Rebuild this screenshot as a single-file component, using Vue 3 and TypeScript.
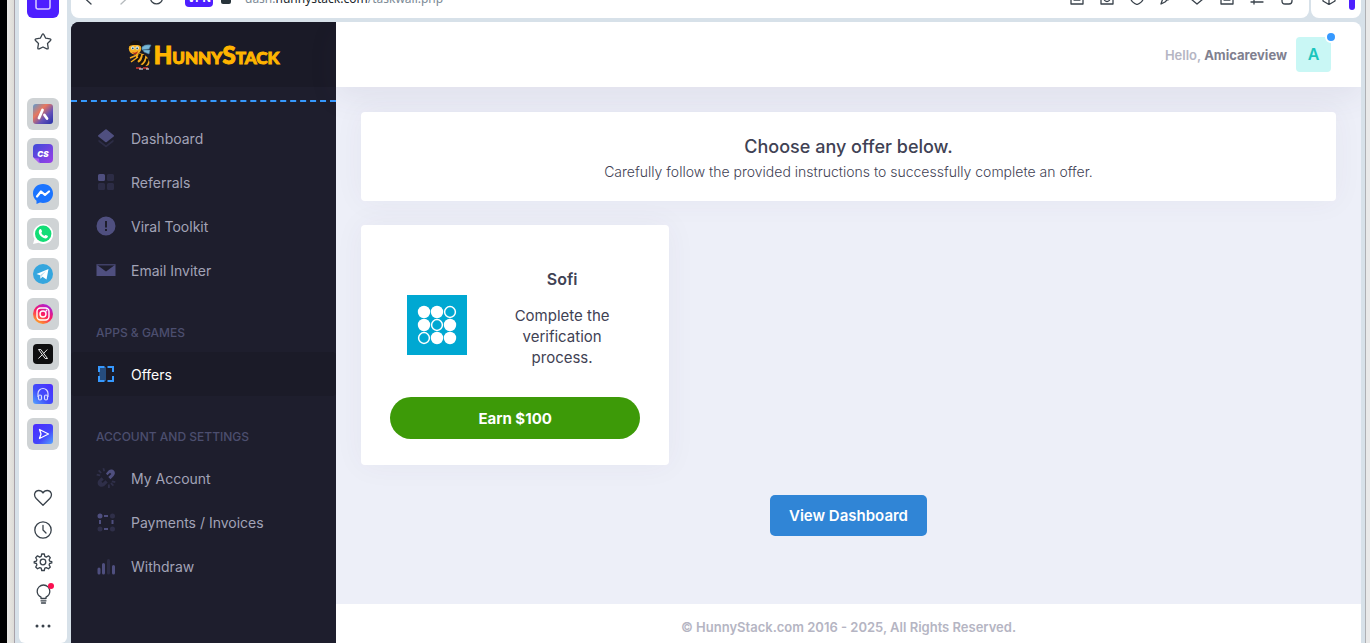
<script setup lang="ts">
interface Shape {
  d: string
  o?: number
}
interface MenuItem {
  label: string
  shapes: Shape[]
  active?: boolean
}
interface MenuGroup {
  title?: string
  items: MenuItem[]
}

const groups: MenuGroup[] = [
  {
    items: [
      {
        label: 'Dashboard',
        shapes: [
          { d: 'M11.3 3.6a1.2 1.2 0 0 1 1.4 0l7 5.6c.5.4.5 1 0 1.400l-7 5.500a1.200 1.200 0 0 1-1.400 0l-7-5.500a.9.9 0 0 1 0-1.400z' },
          { d: 'M4.500 13.500 12 19.300l7.500-5.800v2.200L12.700 21a1.200 1.200 0 0 1-1.400 0l-6.800-5.300z', o: 0.3 },
        ],
      },
      {
        label: 'Referrals',
        shapes: [
          { d: 'M5.500 4h4A1.500 1.500 0 0 1 11 5.500v4A1.500 1.500 0 0 1 9.500 11h-4A1.500 1.500 0 0 1 4 9.500v-4A1.500 1.500 0 0 1 5.500 4z' },
          {
            d: 'M14.500 4h4A1.500 1.500 0 0 1 20 5.500v4a1.500 1.500 0 0 1-1.500 1.500h-4A1.500 1.500 0 0 1 13 9.500v-4A1.500 1.500 0 0 1 14.500 4zM5.500 13h4a1.500 1.500 0 0 1 1.500 1.500v4A1.500 1.500 0 0 1 9.500 20h-4A1.500 1.500 0 0 1 4 18.500v-4A1.500 1.500 0 0 1 5.500 13zM14.500 13h4a1.500 1.500 0 0 1 1.500 1.500v4a1.500 1.500 0 0 1-1.500 1.500h-4a1.500 1.500 0 0 1-1.500-1.500v-4a1.500 1.500 0 0 1 1.500-1.500z',
            o: 0.3,
          },
        ],
      },
      {
        label: 'Viral Toolkit',
        shapes: [{ d: 'M12 2.500a9.500 9.500 0 1 1 0 19 9.500 9.500 0 0 1 0-19zM11 7v6.500h2V7zM11 15v2h2v-2z' }],
      },
      {
        label: 'Email Inviter',
        shapes: [
          { d: 'M2.500 6.500 12 13.500l9.500-7V18h-19z' },
          { d: 'M2.500 6h19v.7L20 7.500H4l-1.500-.8z', o: 0.7 },
        ],
      },
    ],
  },
  {
    title: 'APPS & GAMES',
    items: [
      {
        label: 'Offers',
        active: true,
        shapes: [
          { d: 'M4 4h6.500v2H6v4H4zM13.500 4H20v6h-2V6h-4.500zM4 14h2v4h4.500v2H4zM18 14h2v6h-6.500v-2H18z' },
          { d: 'M5 5h7v14H5z', o: 0.4 },
        ],
      },
    ],
  },
  {
    title: 'ACCOUNT AND SETTINGS',
    items: [
      {
        label: 'My Account',
        shapes: [
          { d: 'M12 7.500 14.600 4.600c2-1.800 4.800-1 5.800.7.900 1.600.5 3.300-.8 4.600L16.500 13.200l-2.200-2.200 3-3-1.300-1.300-2.600 2.600z' },
          {
            d: 'M7.500 11.200l2.200 2.200-2.300 2.300 1.300 1.300 2.800-2.800 2.200 2.200-3.200 3.300c-1.900 1.700-4.500 1.300-5.900-.3-1.400-1.500-1.300-3.900.2-5.400zM8.500 2.600l1.700-.5.900 3-1.700.5zM4 5l1.300-1.200 2.500 2.600L6.500 7.600zM2.500 9.400l.4-1.700 3.500.8-.4 1.700zM18 14.500l3.500.8-.4 1.700-3.500-.8zM16.300 17.800l1.300-1.200 2.400 2.400-1.200 1.300zM14 18.500h1.800V22H14z',
            o: 0.35,
          },
        ],
      },
      {
        label: 'Payments / Invoices',
        shapes: [
          { d: 'M6 3.500a2.500 2.500 0 1 1 0 5 2.500 2.500 0 0 1 0-5zM10 5h4v2h-4zM10 18h4v2h-4zM5 10h2v4H5zM17.500 10h2v4h-2z' },
          {
            d: 'M18.500 3.500a2.500 2.500 0 1 1 0 5 2.500 2.500 0 0 1 0-5zM6 16.500a2.500 2.500 0 1 1 0 5 2.500 2.500 0 0 1 0-5zM18.500 16.500a2.500 2.500 0 1 1 0 5 2.500 2.500 0 0 1 0-5z',
            o: 0.35,
          },
        ],
      },
      {
        label: 'Withdraw',
        shapes: [
          { d: 'M3.500 15a1.500 1.500 0 0 1 3 0v4a1.500 1.500 0 0 1-3 0zM8 10.500a1.500 1.500 0 0 1 3 0V19a1.500 1.500 0 0 1-3 0zM18 12.500a1.500 1.500 0 0 1 3 0V19a1.500 1.500 0 0 1-3 0z' },
          { d: 'M13 6.500a1.500 1.500 0 0 1 3 0V19a1.500 1.500 0 0 1-3 0z', o: 0.3 },
        ],
      },
    ],
  },
]

const toolIcons: string[] = [
  'M2 1h12v14H2zM5 11h6',
  'M2 3h12v12H2zM8 6.500a3 3 0 1 1 0 6 3 3 0 0 1 0-6z',
  'M2 5l6-4 6 4v5c0 2-3 4.500-6 5.500-3-1-6-3.500-6-5.500z',
  'M15 4 6 13l-4 2 2-6zM4 9l5 2',
  'M8 15 2 10c-2-4 3-9 6-4 3-5 8 0 6 4z',
  'M2 2h12v13H2zM8 5v6M5 11h6',
  'M2 8h12M2 13h12M5 11v4',
  'M3 6h10v6c0 2-1 3-3 3H6c-2 0-3-1-3-3z',
]

const dots = [0, 1, 2, 3, 4, 5, 6, 7, 8].map((i) => ({
  cx: 17 + (i % 3) * 13,
  cy: 17 + Math.floor(i / 3) * 13,
  hollow: i === 2 || i === 4 || i === 6,
}))
</script>

<template>
  <div class="desktop">
    <div class="edge-black"></div>
    <div class="edge-light"></div>
    <nav class="rail" aria-label="Browser sidebar">
      <div class="rail-top">
        <button class="workspace" aria-label="Workspace">
          <svg viewBox="0 0 16 16" width="16" height="16"><rect x="1" y="1" width="14" height="14" rx="2" fill="none" stroke="#d9cfff" stroke-width="1.500" /></svg>
        </button>
      </div>
      <button class="rail-btn star" aria-label="Bookmarks">
        <svg viewBox="0 0 20 20" width="20" height="20" class="line"><path d="M9.200 2.500q.8-1.200 1.600 0l1.900 3.700 4.300.7q1.500.4.500 1.600l-3 3 .7 4.400q0 1.500-1.400.9L10 15l-3.800 1.800q-1.400.6-1.400-.9l.7-4.400-3-3q-1-1.200.5-1.600l4.300-.7z" /></svg>
      </button>
      <div class="apps">
        <button class="tile" aria-label="Aria">
          <svg viewBox="0 0 20 20" width="20" height="20">
            <defs><linearGradient id="ga" x1="0" y1="0" x2="1" y2="1"><stop offset="0" stop-color="#5b9bd0" /><stop offset=".35" stop-color="#e8775d" /><stop offset=".65" stop-color="#6452b8" /><stop offset="1" stop-color="#2531a8" /></linearGradient></defs>
            <rect width="20" height="20" rx="3" fill="url(#ga)" />
            <path d="M9.500 6 6 14M11.500 11l2.500 3.500" stroke="#fff" stroke-width="2.800" stroke-linecap="round" />
          </svg>
        </button>
        <button class="tile" aria-label="CS">
          <svg viewBox="0 0 20 20" width="20" height="20">
            <defs><linearGradient id="gb" x1="0" y1="0" x2="1" y2="1"><stop offset="0" stop-color="#3d4bd8" /><stop offset="1" stop-color="#9a3fe8" /></linearGradient></defs>
            <path d="M4 0h12q4 0 4 4v11q0 4-4 4H7L0 13V4q0-4 4-4z" fill="url(#gb)" /><path d="M1 14l5 .500.500 5z" fill="#a95cf0" />
            <text x="10" y="13" text-anchor="middle" class="cs">CS</text>
          </svg>
        </button>
        <button class="tile" aria-label="Messenger">
          <svg viewBox="0 0 20 20" width="20" height="20"><path d="M10 0c6 0 10 4.200 10 9.500S16 19 10 19l-3-.400L3.500 20v-3.300C1.300 15 0 12.500 0 9.500 0 4.200 4 0 10 0z" fill="#1b74ff" /><path d="M4 12.500 8 7.500l4 3.300 4-3.300" fill="none" stroke="#fff" stroke-width="2.200" stroke-linejoin="round" stroke-linecap="round" /></svg>
        </button>
        <button class="tile" aria-label="WhatsApp">
          <svg viewBox="0 0 20 20" width="20" height="20"><path d="M10 0a10 10 0 1 1-4.500 18.800L0 20l1.500-5A10 10 0 0 1 10 0z" fill="#fff" /><circle cx="10.200" cy="9.800" r="8.200" fill="#12dd76" /><path d="M6.500 5.500c1-1 1.600-.500 2 .500l.5 1.300c.2.700-.8 1.200-.6 1.700.6 1.300 1.600 2.200 2.800 2.700.6.200 1-.900 1.600-.700l1.700.8c.6.300.5 1-.1 1.700-1.300 1.500-3.400 1-5.400-.4C6.500 11.300 4.700 7.800 6.500 5.500z" fill="#fff" /></svg>
        </button>
        <button class="tile" aria-label="Telegram">
          <svg viewBox="0 0 20 20" width="20" height="20"><circle cx="10" cy="10" r="10" fill="#35a6de" /><path d="M3.500 10 15.500 5l-2 10.500-4-2.700-2 1.900-.5-3.500z" fill="#fff" /><path d="M7 11.200 13 7l-4.500 5.200-1 2.500z" fill="#b9def2" /></svg>
        </button>
        <button class="tile" aria-label="Instagram">
          <svg viewBox="0 0 20 20" width="20" height="20">
            <defs><linearGradient id="gc" x1=".8" y1="0" x2=".2" y2="1"><stop offset="0" stop-color="#a020e8" /><stop offset=".5" stop-color="#fb1a63" /><stop offset="1" stop-color="#ffb21e" /></linearGradient></defs>
            <circle cx="10" cy="10" r="10" fill="url(#gc)" />
            <g fill="none" stroke="#fff" stroke-width="1.400"><rect x="4" y="4" width="12" height="12" rx="3.500" /><circle cx="10" cy="10" r="3" /></g><circle cx="13.500" cy="6.500" r=".9" fill="#fff" />
          </svg>
        </button>
        <button class="tile" aria-label="X">
          <svg viewBox="0 0 20 20" width="20" height="20"><rect width="20" height="20" rx="4" fill="#0f0f10" /><path d="M5.500 5.500h2.300l6.700 9h-2.300zM14.300 5.500l-3.800 4M9.400 10.600l-4 3.900" fill="none" stroke="#e8e8e8" /></svg>
        </button>
        <button class="tile" aria-label="Player">
          <svg viewBox="0 0 20 20" width="20" height="20">
            <defs><linearGradient id="gd" x1="1" y1="0" x2="0" y2="1"><stop offset="0" stop-color="#4b2bff" /><stop offset=".6" stop-color="#4150fa" /><stop offset="1" stop-color="#55a5ff" /></linearGradient></defs>
            <rect width="20" height="20" rx="3" fill="url(#gd)" />
            <path d="M5 13V9.500a5 5 0 0 1 10 0V13" fill="none" stroke="#dcdcff" stroke-width="1.200" />
            <g fill="none" stroke="#dcdcff" stroke-width="1.200"><rect x="5.500" y="11" width="3" height="5" rx="1.500" /><rect x="11.500" y="11" width="3" height="5" rx="1.500" /></g>
          </svg>
        </button>
        <button class="tile" aria-label="Send">
          <svg viewBox="0 0 20 20" width="20" height="20"><rect width="20" height="20" rx="3" fill="url(#ge)" /><defs><linearGradient id="ge" x1="0" y1="0" x2="1" y2="1"><stop offset="0" stop-color="#4b2bff" /><stop offset=".6" stop-color="#4346fb" /><stop offset="1" stop-color="#55a5ff" /></linearGradient></defs><path d="M6.500 5.500 15.500 10l-9 4.500L8 10z" fill="none" stroke="#fff" stroke-width="1.300" stroke-linejoin="round" /></svg>
        </button>
      </div>
      <div class="rail-tools">
        <button class="rail-btn" aria-label="Favourites"><svg viewBox="0 0 20 20" width="20" height="20" class="line"><path d="M10 17.300 3.200 10.500C-.3 6.500 2.500 2.500 5.700 2.500c2 0 3.500 1 4.300 2.500.8-1.500 2.300-2.500 4.300-2.500 3.200 0 6 4 2.500 8z" /></svg></button>
        <button class="rail-btn" aria-label="History"><svg viewBox="0 0 20 20" width="20" height="20" class="line"><circle cx="10" cy="10" r="8.200" /><path d="M10 5.500V10l3 3" /></svg></button>
        <button class="rail-btn" aria-label="Settings"><svg viewBox="0 0 20 20" width="20" height="20" class="line"><circle cx="10" cy="10" r="2.800" /><path d="M8.700 2h2.600l.5 2.400 1.500.7 2.200-1.300 1.800 1.900-1.200 2.100.5 1.300 2.200.6v1.200l-2.200.6-.5 1.400 1.200 2.100-1.800 1.800-2.200-1.200-1.500.6-.5 2.300H8.700l-.5-2.300-1.500-.6-2.200 1.200-1.800-1.800 1.200-2.100-.5-1.400-2.200-.6V9.700l2.200-.6.5-1.300L2.700 5.700l1.800-1.900 2.200 1.300 1.500-.7z" /></svg></button>
        <button class="rail-btn" aria-label="Tips"><svg viewBox="0 0 20 20" width="20" height="20" class="line bulb"><path d="M8 14.500v-1.300C5.500 12 4.200 10 4.200 7.300a6.300 6.300 0 0 1 12.600 0c0 2.700-1.300 4.700-3.800 5.900v1.300zM8 16.800h5M8.500 19h4" /><circle cx="18" cy="2" r="3" fill="#fa0f50" stroke="none" /></svg></button>
        <button class="rail-btn" aria-label="More"><svg viewBox="0 0 20 20" width="20" height="20" fill="#39424b"><circle cx="4" cy="10" r="1.500" /><circle cx="10" cy="10" r="1.500" /><circle cx="16" cy="10" r="1.500" /></svg></button>
      </div>
    </nav>

    <div class="window">
      <div class="toolbar">
        <div class="bar address">
          <div class="bar-in">
            <div class="nav-btns">
              <svg viewBox="0 0 16 16" width="16" height="16" class="line"><path d="M11 2 4 8.500 11 15" /></svg>
              <svg viewBox="0 0 16 16" width="16" height="16" class="line pale"><path d="M5 2l7 6.500L5 15" /></svg>
              <svg viewBox="0 0 16 16" width="16" height="16" class="line"><path d="M13 5a6 6 0 1 1-9 0" /></svg>
              <span class="vpn">VPN</span>
              <span class="lock"></span>
            </div>
            <span class="url">dash.<b>hunnystack.com</b>/taskwall.php</span>
            <div class="tools">
              <svg v-for="(d, i) in toolIcons" :key="i" viewBox="0 0 16 16" width="16" height="16" class="line"><path :d="d" /></svg>
            </div>
          </div>
        </div>
        <div class="bar extra">
          <div class="bar-in">
            <svg viewBox="0 0 16 16" width="16" height="16" class="line"><path d="M8 15.500 2 12V4l6-3 6 3v8zM2 6l6 3.500L14 6M8 9.500v6" /></svg>
            <span class="pill"></span>
          </div>
        </div>
      </div>

      <div class="site">
        <aside class="aside">
          <a href="#" class="brand">
            <svg viewBox="0 0 24 30" width="24" height="30">
              <path d="M14 7q3-3 9-2l-2 4-7 1zM15 10l7 0-1 4-5-2z" fill="#79b8d8" stroke="#477f9e" stroke-width=".6" />
              <path d="M8 14q6-2 10 2c5 5 4 10 0 10-5 0-9-4-10-8z" fill="#f2a91d" />
              <path d="M12 14q-1 5-5 7M16 15q0 6-5 9M19.500 18.500q0 5-5 8" fill="none" stroke="#17120d" stroke-width="2.600" />
              <path d="M2 18l7-3M3 22l7-5" stroke="#f2a91d" stroke-width="1.500" />
              <ellipse cx="7" cy="8.500" rx="6.200" ry="6" fill="#f6b023" />
              <path d="M1 6Q2 .500 8 .500q6 .5 6 6L10 5 5 5z" fill="#17120d" />
              <circle cx="4.800" cy="8" r="1.800" fill="#d7eff7" /><circle cx="9.200" cy="8" r="1.800" fill="#d7eff7" />
              <circle cx="4.800" cy="8.300" r=".9" fill="#245d78" /><circle cx="9.200" cy="8.300" r=".9" fill="#245d78" />
              <path d="M4 12q3 2 6-1-1 4-4 3z" fill="#b3261c" />
              <path d="M8 28h5M15 28h5" stroke="#d33a31" stroke-width="1.600" /><path d="M11 29h4M18 29h3" stroke="#fff" stroke-width="1.200" />
            </svg>
            <span class="brand-name">HunnyStack</span>
          </a>
          <div class="dashes"></div>
          <nav class="menu" aria-label="Main">
            <div v-for="(g, gi) in groups" :key="gi">
              <h2 v-if="g.title" class="menu-title">{{ g.title }}</h2>
              <a v-for="it in g.items" :key="it.label" href="#" class="menu-link" :class="{ active: it.active }">
                <svg viewBox="0 0 24 24" width="24" height="24"><path v-for="(s, si) in it.shapes" :key="si" :d="s.d" :opacity="s.o ?? 1" fill-rule="evenodd" /></svg>
                <span>{{ it.label }}</span>
              </a>
            </div>
          </nav>
        </aside>

        <div class="main">
          <header class="head">
            <span class="hello">Hello, <b>Amicareview</b></span>
            <div class="avatar">A<i class="badge"></i></div>
          </header>
          <main class="content">
            <section class="card intro">
              <h1>Choose any offer below.</h1>
              <p>Carefully follow the provided instructions to successfully complete an offer.</p>
            </section>
            <div class="offers">
              <article class="card offer">
                <div class="offer-row">
                  <svg viewBox="0 0 60 60" width="60" height="60" class="offer-logo">
                    <rect width="60" height="60" fill="#00a8d2" />
                    <circle v-for="(c, i) in dots" :key="i" :cx="c.cx" :cy="c.cy" :r="c.hollow ? 5.4 : 6.2" :fill="c.hollow ? 'none' : '#fff'" stroke="#fff" :stroke-width="c.hollow ? 1.5 : 0" />
                  </svg>
                  <div class="offer-text">
                    <h3>Sofi</h3>
                    <p>Complete the verification process.</p>
                  </div>
                </div>
                <button class="earn">Earn $100</button>
              </article>
            </div>
            <a href="#" class="view">View Dashboard</a>
          </main>
          <footer class="foot">© HunnyStack.com 2016 - 2025, All Rights Reserved.</footer>
        </div>
      </div>
    </div>
    <div class="edge-right"></div>
  </div>
</template>

<style>
body {
  background: #d7e1e9;
}
</style>

<style scoped>
* {
  box-sizing: border-box;
}
h1,
h2,
h3,
p {
  margin: 0;
}
button {
  border: 0;
  padding: 0;
  background: none;
  font: inherit;
}
a {
  text-decoration: none;
}
svg {
  display: block;
  flex: none;
}
.desktop {
  display: flex;
  height: 100vh;
  overflow: hidden;
  background: #d7e1e9;
  font-family: Inter, "Liberation Sans", sans-serif;
  font-size: 14px;
}
.edge-black {
  width: 7px;
  background: #000;
}
.edge-light {
  width: 8px;
  margin-right: 4px;
  background: linear-gradient(90deg, #eae9e4, #dddcd8);
  border-right: 1px solid #a8a2a9;
}
.edge-right {
  width: 5px;
  margin-left: 4px;
  background: #e9e9e9;
  border-left: 1px solid #aeb0b4;
}
.line {
  fill: none;
  stroke: #39424b;
  stroke-width: 1.3;
  stroke-linejoin: round;
  stroke-linecap: round;
}
.pale {
  stroke: #b5babd;
}
.bulb {
  overflow: visible;
}
.rail {
  width: 48px;
  background: #fff;
  border-radius: 0 0 6px 6px;
  display: flex;
  flex-direction: column;
  align-items: center;
}
.rail-top {
  height: 18px;
  display: flex;
  align-items: flex-end;
  overflow: hidden;
}
.workspace {
  width: 32px;
  height: 32px;
  flex: none;
  border-radius: 6px;
  background: #4d1fff;
  display: grid;
  place-items: center;
}
.rail-btn {
  width: 32px;
  height: 32px;
  display: grid;
  place-items: center;
}
.star {
  margin: 8px 0 40px;
}
.apps {
  display: flex;
  flex-direction: column;
  gap: 8px;
}
.tile {
  width: 32px;
  height: 32px;
  border-radius: 6px;
  background: #cfd3d5;
  display: grid;
  place-items: center;
}
.cs {
  font: italic 900 8px Inter, sans-serif;
  fill: #fff;
}
.rail-tools {
  margin-top: 32px;
}
.window {
  flex: 1;
  min-width: 0;
  margin-left: 4px;
  display: flex;
  flex-direction: column;
}
.toolbar {
  display: flex;
  gap: 2px;
  height: 18px;
  margin-bottom: 4px;
}
.bar {
  background: #fff;
  border-radius: 0 0 8px 8px;
  display: flex;
  align-items: flex-end;
  overflow: hidden;
}
.address {
  flex: 1;
}
.extra {
  width: 50px;
}
.bar-in {
  flex: 1;
  height: 42px;
  display: flex;
  align-items: center;
}
.address .bar-in {
  padding: 0 14px 0 9px;
}
.nav-btns {
  display: grid;
  grid-template-columns: 36px 32px 37px 36px 24px;
  align-items: center;
}
.vpn {
  width: 28px;
  height: 20px;
  border-radius: 4px;
  background: #4d1fff;
  color: #fff;
  font-size: 11px;
  font-weight: 700;
  line-height: 22px;
  text-align: center;
}
.lock {
  width: 10px;
  height: 14px;
  border-radius: 2px;
  background: #28343b;
}
.url {
  flex: 1;
  padding-top: 3px;
  font: 12px/20px "Noto Sans", sans-serif;
  color: #7c8a96;
}
.url b {
  font-weight: 400;
  color: #20262b;
}
.tools {
  display: flex;
  gap: 14px;
}
.extra .bar-in {
  padding-left: 10px;
  gap: 12px;
}
.pill {
  width: 6px;
  height: 26px;
  border-radius: 3px;
  background: #4d1fff;
}
.site {
  flex: 1;
  min-height: 0;
  display: flex;
  border-radius: 8px 8px 0 0;
  overflow: hidden;
}
.aside {
  width: 265px;
  flex: none;
  background: #1e1e2d;
}
.brand {
  height: 65px;
  background: #1a1a27;
  display: flex;
  align-items: center;
  justify-content: center;
  gap: 2px;
}
.brand-name {
  font: 900 24px/30px Lato, sans-serif;
  font-variant: small-caps;
  color: #ffb400;
  -webkit-text-stroke: 1px #ffb400;
}
.dashes {
  margin-top: 13px;
  border-top: 2px dashed #3699ff;
}
.menu {
  padding-top: 14px;
}
.menu-title {
  padding: 21px 0 0 25px;
  font-size: 12px;
  font-weight: 500;
  line-height: 39px;
  color: #4c4e6f;
}
.menu-link {
  height: 44px;
  padding-left: 23px;
  display: flex;
  align-items: center;
  gap: 13px;
  color: #a2a3b7;
  border-radius: 4px;
}
.menu-link svg {
  fill: #4f4f7f;
}
.menu-link.active {
  background: #1b1b28;
  color: #fff;
}
.menu-link.active svg {
  fill: #3699ff;
}
.main {
  flex: 1;
  min-width: 0;
  display: flex;
  flex-direction: column;
  background: #edeff8;
}
.head {
  height: 65px;
  flex: none;
  padding: 0 30px;
  display: flex;
  align-items: center;
  justify-content: flex-end;
  gap: 9px;
  background: #fff;
  box-shadow: 0 10px 30px rgba(82, 63, 105, 0.08);
}
.hello {
  font-size: 13px;
  font-weight: 600;
  color: #b5b5c3;
}
.hello b {
  font-weight: 700;
  color: #80808f;
}
.avatar {
  position: relative;
  width: 35px;
  height: 35px;
  border-radius: 4px;
  background: #c9f7f5;
  color: #1bc5bd;
  font-size: 16px;
  font-weight: 600;
  line-height: 35px;
  text-align: center;
}
.badge {
  position: absolute;
  top: -6px;
  right: -6px;
  width: 12px;
  height: 12px;
  border-radius: 50%;
  border: 2px solid #fff;
  background: #3699ff;
}
.content {
  flex: 1;
  padding: 25px;
  display: flex;
  flex-direction: column;
}
.card {
  background: #fff;
  border-radius: 4px;
  box-shadow: 0 0 30px rgba(82, 63, 105, 0.05);
}
.intro {
  padding: 22px 24px 17px;
  text-align: center;
  color: #3f4254;
}
.intro h1 {
  font-size: 18px;
  font-weight: 500;
  line-height: 26px;
}
.intro p {
  font-size: 14px;
  font-weight: 300;
  line-height: 24px;
}
.offers {
  margin-top: 24px;
  display: grid;
  grid-template-columns: repeat(3, 1fr);
  gap: 25px;
}
.offer {
  padding: 42px 29px 26px;
}
.offer-row {
  display: grid;
  grid-template-columns: 3fr 5fr;
  align-items: center;
}
.offer-logo {
  justify-self: center;
  margin-top: 14px;
}
.offer-text {
  padding: 0 16px;
  text-align: center;
  color: #3f4254;
}
.offer-text h3 {
  font-size: 16px;
  font-weight: 600;
  line-height: 24px;
}
.offer-text p {
  margin-top: 14px;
  font-size: 15px;
  line-height: 21px;
}
.earn {
  width: 100%;
  height: 42px;
  margin-top: 29px;
  border-radius: 21px;
  background: #3d9a08;
  color: #fff;
  font-size: 15px;
  font-weight: 700;
}
.view {
  align-self: center;
  margin-top: 30px;
  padding: 0 19px;
  border-radius: 5px;
  background: #3085d6;
  color: #fff;
  font-size: 15px;
  font-weight: 600;
  line-height: 41px;
}
.foot {
  padding: 12px 0 5px;
  background: #fff;
  color: #b5b5c3;
  font-size: 13px;
  font-weight: 600;
  line-height: 22px;
  text-align: center;
}
</style>
